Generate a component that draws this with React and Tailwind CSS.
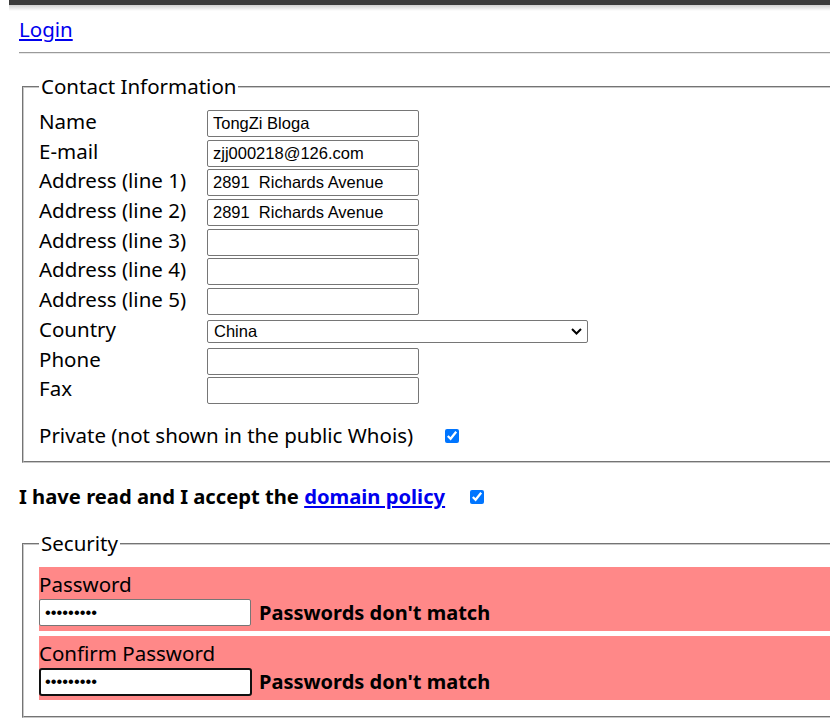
import React from "react";

const inputCls =
  "block h-[27px] w-[212px] border border-[#767676] rounded-[2px] bg-white pl-[5px] text-[16.5px] text-black font-['Liberation_Sans',Arial,sans-serif] outline-none";

function Row({ label, children }) {
  return (
    <>
      <div className="h-[27px] leading-[23px] text-[20.5px] whitespace-nowrap">{label}</div>
      <div className="h-[27px] flex items-center">{children}</div>
    </>
  );
}

function Chevron() {
  return (
    <svg width="11" height="7" viewBox="0 0 11 7" className="absolute right-[6px] top-[8px]">
      <path d="M1 1 L5.5 5.5 L10 1" fill="none" stroke="#000" strokeWidth="2" />
    </svg>
  );
}

export default function App() {
  return (
    <div className="w-[830px] h-[728px] overflow-hidden bg-white text-black font-['Noto_Sans','Open_Sans',sans-serif] text-[20.5px]">
      <div className="ml-[9px] h-[5px] bg-[#3a3a3a]" />
      <div className="ml-[9px] h-[6px] bg-gradient-to-b from-[#cfcfcf] to-white" />

      <div className="mt-[5px] pl-[19px] h-[27px] leading-[27px]">
        <a href="#" className="text-[#0000ee] underline">Login</a>
      </div>

      <div className="mt-[9px] ml-[19px] h-0 border-t border-b border-t-[#9a9a9a] border-b-[#e8e8e8]" />

      <div className="mt-[19px] ml-[22px] w-[900px]">
        <fieldset className="border-2 [border-style:groove] border-[#c8c8c8] px-[15px] pt-0 pb-[12px]">
          <legend className="px-[2px] leading-[27px]">Contact Information</legend>
          <div className="mt-[10px] grid grid-cols-[168px_auto] gap-y-[2.7px] items-center">
            <Row label="Name">
              <input className={inputCls} defaultValue="TongZi Bloga" />
            </Row>
            <Row label="E-mail">
              <input className={inputCls} defaultValue="zjj000218@126.com" />
            </Row>
            <Row label="Address (line 1)">
              <input className={inputCls} defaultValue="2891  Richards Avenue" />
            </Row>
            <Row label="Address (line 2)">
              <input className={inputCls} defaultValue="2891  Richards Avenue" />
            </Row>
            <Row label="Address (line 3)">
              <input className={inputCls} defaultValue="" />
            </Row>
            <Row label="Address (line 4)">
              <input className={inputCls} defaultValue="" />
            </Row>
            <Row label="Address (line 5)">
              <input className={inputCls} defaultValue="" />
            </Row>
            <Row label="Country">
              <div className="relative">
                <select
                  defaultValue="China"
                  className="block h-[23px] w-[381px] appearance-none border border-[#767676] rounded-[2px] bg-white pl-[6px] text-[16.5px] leading-[20px] text-black font-['Liberation_Sans',Arial,sans-serif] outline-none"
                >
                  <option>China</option>
                </select>
                <Chevron />
              </div>
            </Row>
            <Row label="Phone">
              <input className={inputCls} defaultValue="" />
            </Row>
            <Row label="Fax">
              <input className={inputCls} defaultValue="" />
            </Row>
          </div>
          <div className="mt-[18px] h-[27px] flex items-center">
            <span className="leading-[27px] whitespace-nowrap">Private (not shown in the public Whois)</span>
            <input type="checkbox" defaultChecked className="ml-[32px] w-[14px] h-[14px] accent-[#0075ff]" />
          </div>
        </fieldset>
      </div>

      <div className="mt-[20px] ml-[19px] h-[27px] flex items-center font-bold text-[20.2px] whitespace-nowrap">
        <span className="leading-[27px]">I have read and I accept the&nbsp;</span>
        <a href="#" className="leading-[27px] text-[#0000ee] underline">domain policy</a>
        <input type="checkbox" defaultChecked className="ml-[25px] w-[14px] h-[14px] accent-[#0075ff]" />
      </div>

      <div className="mt-[20px] ml-[22px] w-[900px]">
        <fieldset className="border-2 [border-style:groove] border-[#c8c8c8] px-[15px] pt-0 pb-[16px]">
          <legend className="px-[2px] leading-[27px]">Security</legend>
          <div className="mt-[10px] bg-[#ff8888] py-[4px]">
            <div className="h-[27px] leading-[27px]">Password</div>
            <div className="h-[29px] flex items-center">
              <input type="password" className={inputCls} defaultValue="abcdefghi" />
              <span className="ml-[8px] font-bold text-[20px] leading-[27px] whitespace-nowrap">Passwords don't match</span>
            </div>
          </div>
          <div className="mt-[5px] bg-[#ff8888] py-[4px]">
            <div className="h-[27px] leading-[27px]">Confirm Password</div>
            <div className="h-[29px] flex items-center">
              <input
                type="password"
                className="block h-[28px] w-[213px] border-2 border-[#101010] rounded-[3px] bg-white pl-[4px] text-[16.5px] text-black font-['Liberation_Sans',Arial,sans-serif] outline-none"
                defaultValue="abcdefghi"
              />
              <span className="ml-[7px] font-bold text-[20px] leading-[27px] whitespace-nowrap">Passwords don't match</span>
            </div>
          </div>
        </fieldset>
      </div>
    </div>
  );
}
